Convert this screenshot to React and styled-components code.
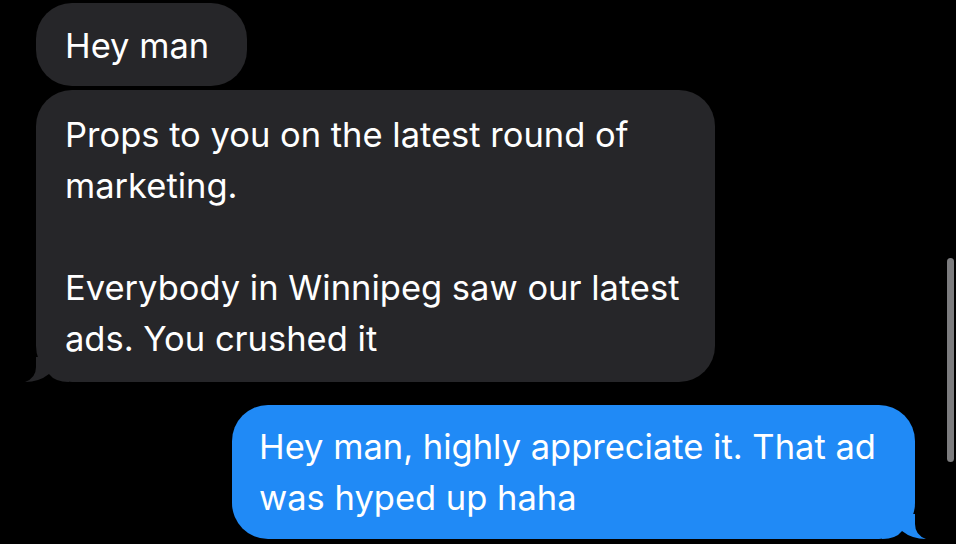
import React from 'react';
import styled, { createGlobalStyle } from 'styled-components';

const GlobalStyle = createGlobalStyle`
  html, body {
    margin: 0;
    padding: 0;
    background: #000000;
  }
  body {
    width: 956px;
    height: 544px;
    overflow: hidden;
    font-family: Inter, "Noto Sans", "Liberation Sans", sans-serif;
  }
`;

const Thread = styled.div`
  display: flex;
  flex-direction: column;
  align-items: flex-start;
  gap: 4px;
  padding: 3px 41px 0 36px;
  height: 544px;
  box-sizing: border-box;
  background: #000000;
`;

const Bubble = styled.div`
  position: relative;
  box-sizing: border-box;
  width: ${(p) => (p.$w ? `${p.$w}px` : 'auto')};
  padding: ${(p) => p.$pad || '17px 38px 15px 29px'};
  border-radius: 36px;
  background: ${(p) => (p.$sent ? '#208af6' : '#262629')};
  color: #ffffff;
  font-size: 34.5px;
  line-height: 51px;
  align-self: ${(p) => (p.$sent ? 'flex-end' : 'flex-start')};
  margin-top: ${(p) => (p.$sent ? '19px' : '0')};
`;

const Tail = styled.svg`
  position: absolute;
  bottom: 0;
  width: 44px;
  height: 25px;
  ${(p) => (p.$sent ? 'right: -11px; transform: scaleX(-1);' : 'left: -11px;')}
`;

const ScrollThumb = styled.div`
  position: fixed;
  top: 258px;
  right: 2px;
  width: 7px;
  height: 204px;
  border-radius: 4px;
  background: #7c7c7e;
`;

const BubbleTail = ({ sent, color }) => (
  <Tail $sent={sent} viewBox="0 0 44 25">
    <path d="M11 0 L11 10 Q11 21 0 25 Q14 25 24 17 Q30 25 44 25 L44 0 Z" fill={color} />
  </Tail>
);

const App = () => {
  return (
    <>
      <GlobalStyle />
      <Thread>
        <Bubble>Hey man</Bubble>
        <Bubble $w={679} $pad="19px 20px 18px 29px">
          Props to you on the latest round of
          <br />
          marketing.
          <br />
          <br />
          Everybody in Winnipeg saw our latest
          <br />
          ads. You crushed it
          <BubbleTail color="#262629" />
        </Bubble>
        <Bubble $sent $w={683} $pad="16px 20px 16px 27px">
          Hey man, highly appreciate it. That ad
          <br />
          was hyped up haha
          <BubbleTail sent color="#208af6" />
        </Bubble>
      </Thread>
      <ScrollThumb />
    </>
  );
};

export default App;
